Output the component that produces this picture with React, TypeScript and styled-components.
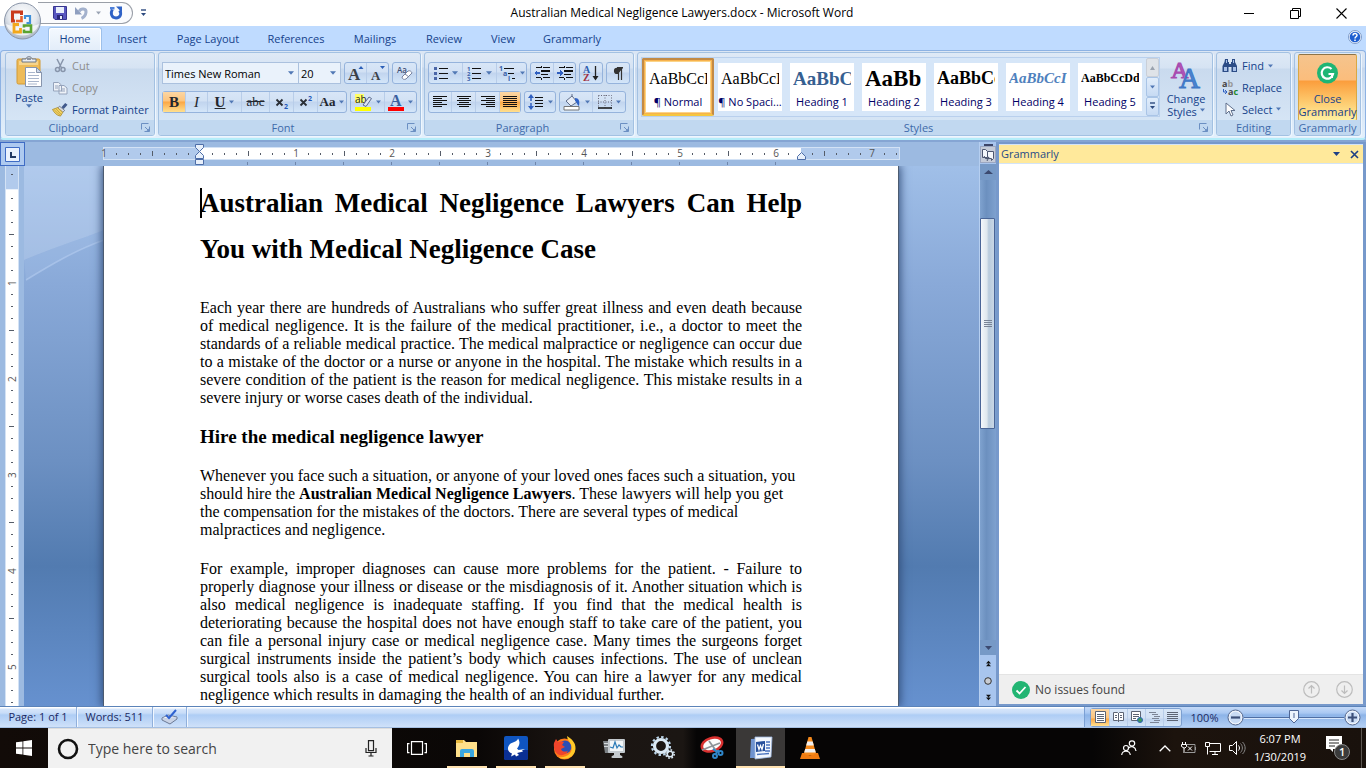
import React from 'react';
import styled, { createGlobalStyle, css } from 'styled-components';

const UI = '"Open Sans", "Noto Sans", sans-serif';
const SERIF = '"Liberation Serif", "Times New Roman", serif';

const Global = createGlobalStyle`
  *, *::before, *::after { box-sizing: border-box; }
  body { margin: 0; font-family: ${UI}; font-size: 11px; color: #15428b; overflow: hidden; }
  button, input, select { font: inherit; color: inherit; }
  button { background: none; border: 0; padding: 0; margin: 0; cursor: default; }
  h1, h2, p { margin: 0; font-weight: normal; }
  svg { display: block; flex: none; overflow: visible; }
`;

const Window = styled.div`
  display: flex;
  flex-direction: column;
  height: 100vh;
  position: relative;
`;

/* ---------- title bar ---------- */
const TitleBar = styled.header`
  display: flex;
  align-items: center;
  justify-content: space-between;
  height: 26px;
  padding-right: 2px;
  background: #fff;
`;
const OfficeButton = styled.button`
  position: absolute;
  left: 3px;
  top: 2px;
  z-index: 3;
`;
const TitleSide = styled.div<{ $end?: boolean }>`
  display: flex;
  align-items: center;
  flex: 1 0 0;
  justify-content: ${p => (p.$end ? 'flex-end' : 'flex-start')};
`;
const QuickAccess = styled.div`
  display: flex;
  align-items: center;
  gap: 8px;
  width: 95px;
  height: 22px;
  margin-left: 38px;
  padding-left: 15px;
  border: 1px solid #9a9fa8;
  border-left: 0;
  border-radius: 0 11px 11px 0;
  background: #fafbfd;
`;
const QuickMore = styled.button`
  margin-left: 7px;
`;
const WindowTitle = styled.h1`
  font-size: 12px;
  line-height: 26px;
  color: #000;
  white-space: nowrap;
`;
const WindowButton = styled.button`
  display: flex;
  align-items: center;
  justify-content: center;
  width: 46px;
  height: 26px;
`;

/* ---------- tabs ---------- */
const TabRow = styled.nav`
  display: flex;
  align-items: flex-end;
  height: 24px;
  padding-left: 47px;
  background: #bfdbff;
`;
const Tab = styled.button<{ $w: number; $active?: boolean }>`
  width: ${p => p.$w}px;
  height: 23px;
  line-height: 23px;
  ${p => p.$active && css`
    width: ${p.$w - 2}px;
    margin: 0 1px;
    border: 1px solid #9dc0ea;
    border-bottom: 0;
    border-radius: 3px 3px 0 0;
    line-height: 22px;
    background: linear-gradient(#f4f9ff, #e3edf9);
    box-shadow: inset 1px 1px 0 #fff, inset -1px 0 0 #fff;
  `}
`;
const HelpButton = styled.button`
  margin-left: auto;
  margin-right: 4px;
  margin-bottom: 6px;
`;

/* ---------- ribbon ---------- */
const Ribbon = styled.section`
  display: flex;
  gap: 3px;
  height: 90px;
  padding: 1px 4px 2px;
  border: 1px solid #8db2e3;
  border-bottom: 2px solid #b4edf9;
  border-radius: 4px;
  background: linear-gradient(#dbe6f4 0, #d3e1f2 16px, #c8d9ee 17px, #e3f0fc 100%);
`;
const RibbonBack = styled.div`
  background: linear-gradient(#bfdbff 50%, #9ebce4 50%);
`;
const GroupBox = styled.div<{ $w?: number }>`
  display: flex;
  flex-direction: column;
  ${p => (p.$w ? `flex: 0 0 ${p.$w}px;` : 'flex: 1 1 0; min-width: 0;')}
  border: 1px solid #a3c1e2;
  border-radius: 3px;
  box-shadow: 1px 1px 0 #eef6fe;
  background: linear-gradient(#dee9f6 0, #d6e3f3 15px, #c9daee 16px, #d9e8f7 100%);
`;
const GroupBody = styled.div<{ $pad?: string }>`
  display: flex;
  flex: 1;
  min-height: 0;
  padding: ${p => p.$pad ?? '0'};
`;
const GroupLabel = styled.div`
  display: flex;
  align-items: center;
  height: 15px;
  padding: 0 4px 0 0;
  background: #c1d8f0;
  color: #3e6aaa;
  line-height: 15px;
  border-radius: 0 0 2px 2px;
  span { flex: 1; text-align: center; white-space: nowrap; }
`;
const PlainLabel = styled(GroupLabel)`
  padding: 0;
`;
const LargeButton = styled.button<{ $w: number; $hot?: boolean }>`
  display: flex;
  flex-direction: column;
  align-items: center;
  justify-content: flex-start;
  width: ${p => p.$w}px;
  padding-top: 3px;
  line-height: 13px;
  white-space: nowrap;
  span { display: flex; align-items: center; justify-content: center; gap: 3px; }
  svg:first-child { margin-bottom: 3px; }
  ${p => p.$hot && css`
    height: 67px;
    margin: 1px 3px;
    padding-top: 2px;
    border: 1px solid #b7914f;
    border-color: #8e7346 #d9a844 #f3c838;
    border-radius: 2px;
    background: linear-gradient(#f5c48d 0, #fbbd7c 25px, #fb9d3c 26px, #fdc467 44px, #fff0a0 100%);
  `}
`;
const SmallColumn = styled.div`
  display: flex;
  flex-direction: column;
  padding-top: 2px;
`;
const SmallButton = styled.button<{ $off?: boolean }>`
  display: flex;
  align-items: center;
  gap: 4px;
  height: 22px;
  white-space: nowrap;
  color: ${p => (p.$off ? '#8d8d8d' : '#15428b')};
`;
const IconSlot = styled.span`
  display: flex;
  justify-content: center;
  width: 16px;
`;
const Rows = styled.div`
  display: flex;
  flex-direction: column;
  gap: 7px;
  padding: 9px 3px 0;
`;
const Row = styled.div`
  display: flex;
  gap: 3px;
`;
const ButtonSet = styled.div`
  display: flex;
  height: 22px;
  border: 1px solid #95b3dc;
  border-radius: 3px;
  background: linear-gradient(#d8e6f7 0, #d2e1f4 9px, #c1d4ee 10px, #d4e6f9 100%);
`;
const ToolButton = styled.button<{ $w: number; $on?: boolean }>`
  display: flex;
  align-items: center;
  justify-content: center;
  gap: 4px;
  width: ${p => p.$w}px;
  height: 20px;
  & + & { border-left: 1px solid #b8cde9; }
  ${p => p.$on && css`
    background: linear-gradient(#fbd6a4 0, #fdc47c 9px, #fba745 10px, #ffe08f 100%);
  `}
`;
const Combo = styled.label<{ $w: number }>`
  position: relative;
  display: block;
  width: ${p => p.$w}px;
  height: 22px;
  & + & { margin-left: -4px; }
  select {
    appearance: none;
    width: 100%;
    height: 22px;
    padding: 0 2px;
    border: 1px solid #abc1de;
    border-radius: 0;
    background: #eaf2fb;
    color: #000;
    outline: 0;
  }
  svg { position: absolute; right: 5px; top: 9px; pointer-events: none; }
`;

/* styles gallery */
const Gallery = styled.div`
  display: flex;
  flex: 1 1 0;
  min-width: 0;
  height: 60px;
  border: 1px solid #b9d0ed;
  background: #d6e6f8;
`;
const GalleryItems = styled.div`
  display: flex;
  flex: 1 1 0;
  min-width: 0;
  overflow: hidden;
`;
const StyleCard = styled.button<{ $on?: boolean }>`
  display: flex;
  flex: 0 0 72px;
  flex-direction: column;
  align-items: stretch;
  min-width: 0;
  height: 58px;
  padding: 3px 2px;
  border: 2px solid #fff0;
  background: #fff;
  background-clip: content-box;
  color: #000066;
  ${p => p.$on && css`
    border: 2px solid #c28a46;
    border-bottom-color: #f5c63f;
    border-radius: 2px;
    background-clip: padding-box;
    box-shadow: inset 0 0 0 1px #f7b24d, inset 0 0 0 2px #fbd488;
  `}
`;
const Sample = styled.span<{ $size: number; $bold?: boolean; $italic?: boolean; $color?: string }>`
  flex: 0 0 31px;
  margin: 0 3px;
  overflow: hidden;
  font-family: ${SERIF};
  font-size: ${p => p.$size}px;
  font-weight: ${p => (p.$bold ? 700 : 400)};
  font-style: ${p => (p.$italic ? 'italic' : 'normal')};
  color: ${p => p.$color ?? '#000'};
  line-height: 31px;
  text-align: left;
  white-space: nowrap;
`;
const SampleName = styled.span`
  line-height: 16px;
  text-align: center;
  white-space: nowrap;
`;
const GalleryScroll = styled.div`
  display: flex;
  flex-direction: column;
  width: 13px;
`;
const GalleryButton = styled.button<{ $off?: boolean }>`
  display: flex;
  flex: 1;
  align-items: center;
  justify-content: center;
  border: 1px solid ${p => (p.$off ? '#c9cfd8' : '#a9c4e6')};
  border-radius: 2px;
  background: ${p => (p.$off ? '#dfe3e8' : 'linear-gradient(#e1edfb, #c6daf3)')};
`;

/* ---------- workspace ---------- */
const Workspace = styled.main`
  display: flex;
  flex: 1;
  min-height: 0;
  border-top: 2px solid #85a5d3;
  background: #9cbae1;
`;
const Editor = styled.section`
  display: flex;
  flex: 1 1 0;
  flex-direction: column;
  min-width: 0;
`;
const RulerRow = styled.div`
  display: flex;
  height: 24px;
`;
const TabSelector = styled.button`
  display: flex;
  align-items: center;
  justify-content: center;
  width: 25px;
  height: 24px;
  border: 1px solid #3f6cc4;
  background: #aecaf0;
`;
const HRuler = styled.div`
  position: relative;
  display: flex;
  height: 13px;
  margin: 5px 0 0 73px;
  background:
    linear-gradient(#fff, #fff) 102px 1px / 601px 11px no-repeat,
    linear-gradient(#b1caec, #b1caec) 6px 1px / 795px 11px no-repeat,
    linear-gradient(#d3e2f5, #d3e2f5) 5px 0 / 797px 13px no-repeat;
`;
const HCell = styled.span`
  display: flex;
  align-items: center;
  justify-content: center;
  width: 12px;
  height: 13px;
  font-size: 10px;
  line-height: 13px;
  color: #555;
`;
const HTick = styled.i<{ $long?: boolean }>`
  width: 1px;
  height: ${p => (p.$long ? 5 : 2)}px;
  background: #555c68;
`;
const TabStops = styled.i`
  position: absolute;
  left: 149px;
  top: 15px;
  width: 530px;
  height: 3px;
  background: linear-gradient(90deg, #6f86ab 1px, transparent 1px) 0 0 / 48px 3px repeat-x;
`;
const Marker = styled.span<{ $x: number; $y: number }>`
  position: absolute;
  left: ${p => p.$x}px;
  top: ${p => p.$y}px;
`;
const EditorBody = styled.div`
  display: flex;
  flex: 1;
  min-height: 0;
`;
const VRulerColumn = styled.div`
  flex: 0 0 24px;
  padding-left: 5px;
  overflow: hidden;
`;
const VRuler = styled.div`
  display: flex;
  flex-direction: column;
  align-items: center;
  width: 14px;
  height: 100%;
  padding-top: 3px;
  border: solid #d3e2f5;
  border-width: 0 1px;
  background: linear-gradient(#b1caec 23px, #d3e2f5 23px, #fff 24px);
`;
const VCell = styled.span`
  display: flex;
  flex: 0 0 12px;
  align-items: center;
  justify-content: center;
  width: 12px;
  font-size: 10px;
  line-height: 12px;
  color: #555;
  writing-mode: vertical-rl;
  transform: rotate(180deg);
`;
const VTick = styled.i<{ $long?: boolean }>`
  width: ${p => (p.$long ? 5 : 2)}px;
  height: 1px;
  background: #555c68;
`;
const Canvas = styled.div`
  position: relative;
  display: flex;
  flex: 1 1 0;
  min-width: 0;
  padding-left: 79px;
  overflow: hidden;
  background: linear-gradient(#a0bfe8 0, #89a9d8 120px, #6c90c2 295px, #527bb0 400px, #6691cf 100%);
`;
const Swoosh = styled.svg`
  position: absolute;
  left: 0;
  top: 0;
`;
const Page = styled.article`
  position: relative;
  flex: 0 0 796px;
  padding: 14px 96px 0;
  border: solid #4c5b70;
  border-width: 0 1px;
  background: #fff;
  box-shadow: 0 0 9px 1px #2f4a76;
  color: #000;
  font-family: ${SERIF};
  font-size: 16px;
  line-height: 18px;
`;
const Caret = styled.i`
  position: absolute;
  left: 96px;
  top: 22px;
  width: 2px;
  height: 30px;
  background: #000;
`;
const DocTitle = styled.h1`
  font-size: 27px;
  font-weight: 700;
  line-height: 46px;
  text-align: justify;
`;
const DocHeading = styled.h2`
  margin-top: 21px;
  font-size: 19px;
  font-weight: 700;
  line-height: 18px;
`;
const Para = styled.p<{ $justify?: boolean; $gap: number }>`
  margin-top: ${p => p.$gap}px;
  text-align: ${p => (p.$justify ? 'justify' : 'left')};
`;

/* scroll bar */
const ScrollColumn = styled.div`
  display: flex;
  flex: 0 0 17px;
  flex-direction: column;
  background: #a8c5ee;
  border-left: 1px solid #b6cff0;
`;
const Splitter = styled.div`
  width: 9px;
  height: 2px;
  margin: 2px auto 0;
  background: #3c4568;
`;
const ScrollButton = styled.button<{ $h: number; $mt?: number; $dark?: boolean; $boxed?: boolean }>`
  display: flex;
  align-items: center;
  justify-content: center;
  width: 16px;
  height: ${p => p.$h}px;
  margin-top: ${p => p.$mt ?? 0}px;
  ${p => p.$dark && 'background: #7699c6;'}
  ${p => p.$boxed && 'background: #c5cbd8; border: 1px solid #9ba7c2;'}
`;
const Track = styled.div`
  flex: 1;
  padding-top: 38px;
  background: linear-gradient(90deg, #7fa2cf, #6c90bf 40%, #7ea1cf);
`;
const Thumb = styled.div`
  display: flex;
  align-items: center;
  justify-content: center;
  width: 15px;
  height: 211px;
  border: 1px solid #4a6597;
  border-radius: 1px;
  background: linear-gradient(90deg, #f4f7fb, #dfe7ee 45%, #b9cbdd 60%, #c9d7e6);
`;

/* task pane */
const Pane = styled.aside`
  display: flex;
  flex: 0 0 370px;
  flex-direction: column;
  padding: 2px 3px 2px 0;
  border-left: 3px solid #7799cb;
  background: #7799cb;
`;
const PaneHeader = styled.div`
  display: flex;
  align-items: center;
  gap: 9px;
  height: 20px;
  padding: 0 4px 0 2px;
  border: solid #d3e4f8;
  border-width: 1px 0 1px;
  background: #ffe99b;
  h2 { flex: 1; font-size: 11px; line-height: 18px; color: #274b86; }
`;
const PaneBody = styled.div`
  flex: 1;
  background: #fff;
`;
const PaneFooter = styled.div`
  display: flex;
  align-items: center;
  height: 30px;
  padding: 0 10px 0 13px;
  border-top: 1px solid #e4e4e4;
  background: #efefef;
  color: #444;
  font-size: 12px;
  span { flex: 1; margin-left: 5px; }
  button { margin-left: 16px; }
`;

/* ---------- status bar ---------- */
const StatusBar = styled.footer`
  display: flex;
  height: 22px;
  border-top: 1px solid #5b83b9;
  border-bottom: 1px solid #a5bfe2;
  background: linear-gradient(#fff 0, #fff 1px, #d5e5fa 2px, #c9ddf8 6px, #aecdf5 8px, #cfe1f9 100%);
  color: #1b2a63;
`;
const StatusItem = styled.button<{ $w: number }>`
  display: flex;
  align-items: center;
  justify-content: center;
  width: ${p => p.$w}px;
  padding-bottom: 1px;
  border-right: 1px solid #90b0dc;
  box-shadow: 1px 0 0 #f1f7ff;
`;
const StatusFill = styled.div`
  flex: 1;
`;
const StatusRight = styled.div`
  display: flex;
  align-items: center;
  flex: 0 0 282px;
  padding-left: 5px;
  border-left: 1px solid #7ba0d4;
  background: linear-gradient(#c5daf8 0, #a9c8f2 6px, #8db4e8 8px, #b3cff4 100%);
`;
const ViewSet = styled(ButtonSet)`
  height: 19px;
  border-color: #7c9fd0;
  button { width: 18px; height: 17px; border: 0; }
`;
const ZoomLabel = styled.label`
  width: 45px;
  text-align: center;
`;
const ZoomSlider = styled.div`
  position: relative;
  display: flex;
  align-items: center;
  flex: 1;
  height: 20px;
  input {
    appearance: none;
    width: 100%;
    height: 1px;
    margin: 0;
    background: #4e6ea3;
    box-shadow: 0 1px 0 #d7e6fb;
  }
  input::-webkit-slider-thumb { appearance: none; width: 10px; height: 14px; }
  svg { position: absolute; left: 45px; top: 3px; pointer-events: none; }
`;

/* ---------- taskbar ---------- */
const Taskbar = styled.nav`
  display: flex;
  height: 40px;
  background: linear-gradient(90deg, #120b08 0, #0a0706 35%, #1b1512 42%, #1b1613 50%, #060505 51%, #060505 80%, #1c130d 86%, #19110c 100%);
  color: #fff;
`;
const TaskButton = styled.button<{ $w: number; $open?: boolean; $active?: boolean }>`
  display: flex;
  align-items: center;
  justify-content: center;
  width: ${p => p.$w}px;
  height: 40px;
  ${p => p.$active && 'background: #3a3837;'}
  ${p => p.$open && css`
    background-image: linear-gradient(#ffe2b0, #ffe2b0);
    background-repeat: no-repeat;
    background-size: ${p.$active ? 49 : 40}px 2px;
    background-position: center bottom;
  `}
`;
const SearchBox = styled.label`
  display: flex;
  align-items: center;
  width: 344px;
  padding: 0 14px 0 9px;
  background: #f1f1f1;
  border-top: 1px solid #ddd;
  input {
    flex: 1;
    min-width: 0;
    padding: 0 0 0 9px;
    border: 0;
    outline: 0;
    background: none;
    color: #333;
    font-size: 14px;
  }
  input::placeholder { color: #444; opacity: 1; }
`;
const Tray = styled.div`
  display: flex;
  margin-left: auto;
`;
const Clock = styled.time`
  width: 70px;
  padding-top: 2px;
  font-size: 11px;
  line-height: 18px;
  text-align: center;
  white-space: nowrap;
`;
const ShowDesktop = styled.button`
  width: 5px;
  border-left: 1px solid #5b5550;
`;

/* ---------- icons ---------- */
const Down = ({ c = '#5178b5', w = 6 }: { c?: string; w?: number }) => (
  <svg width={w} height="4" viewBox="0 0 7 4"><path d="M0 0h7L3.5 4z" fill={c} /></svg>
);
const Up = ({ c = '#5178b5', w = 7 }: { c?: string; w?: number }) => (
  <svg width={w} height="4" viewBox="0 0 7 4" preserveAspectRatio="none"><path d="M0 4h7L3.5 0z" fill={c} /></svg>
);
const Launcher = () => (
  <svg width="9" height="9" viewBox="0 0 9 9" fill="none" stroke="#6b8fc2">
    <path d="M.5 6.500V.5h7M4 4l3 3M8.500 3.500v5h-5" /><path d="M5 8.500h3.500V5z" fill="#6b8fc2" stroke="none" />
  </svg>
);
const OfficeLogo = () => (
  <svg width="39" height="39" viewBox="0 0 39 39">
    <defs>
      <radialGradient id="orb" cx="50%" cy="35%" r="65%">
        <stop offset="0" stopColor="#fff" /><stop offset=".6" stopColor="#e4e8ee" /><stop offset="1" stopColor="#a9b4c4" />
      </radialGradient>
    </defs>
    <circle cx="19.500" cy="19" r="18" fill="url(#orb)" stroke="#8a95a8" />
    <path d="M3 22a17 15 0 0 0 33 0 40 40 0 0 1-33 0z" fill="#fff" opacity=".7" />
    <g fill="none" strokeWidth="3">
      <path d="M12 19H9.500V10H18.500v3" stroke="#c93a1c" />
      <path d="M18.500 14v5H13" stroke="#e8642c" strokeWidth="2.600" />
      <path d="M22 17v-3h5v7h-3.500" stroke="#3f8fd8" strokeWidth="2.200" />
      <path d="M16 22.500h-5V30h6.500v-4" stroke="#f3a81c" strokeWidth="2.800" />
      <path d="M21 25.500v-2h7V30h-7v-2.500" stroke="#5aa431" strokeWidth="2.600" />
    </g>
  </svg>
);
const SaveIcon = () => (
  <svg width="14" height="14" viewBox="0 0 14 14">
    <path d="M.5.5h13v13H2L.5 12z" fill="#5856c0" stroke="#37358f" />
    <path d="M3 1h8v6H3z" fill="#e8eefb" /><path d="M4 9h6v4H4z" fill="#2a2878" /><path d="M7 10h2v3H7z" fill="#e8eefb" />
  </svg>
);
const UndoIcon = () => (
  <svg width="13" height="14" viewBox="0 0 13 14">
    <path d="M0 1v7.500h7z" fill="#8f9fc0" /><path d="M4 5.500c2-4 7.500-3 7 .8-.4 3-2 5-4.500 6" fill="none" stroke="#a3b1cd" strokeWidth="3" />
  </svg>
);
const RedoIcon = () => (
  <svg width="14" height="14" viewBox="0 0 14 14">
    <path d="M3.500 3.500C1 7 2.500 12 7 12s6-4.500 3.500-7.500" fill="none" stroke="#2f62c6" strokeWidth="2.800" />
    <path d="M7 .5h6v6z" fill="#2f62c6" /><path d="M1 1h4.500v2.500H1z" fill="#4e80da" />
  </svg>
);
const MoreIcon = () => (
  <svg width="7" height="8" viewBox="0 0 7 8"><path d="M1 1h5" stroke="#2d4a7f" strokeWidth="1.400" /><path d="M1 4h5L3.500 7z" fill="#2d4a7f" /></svg>
);
const HelpIcon = () => (
  <svg width="14" height="14" viewBox="0 0 14 14">
    <circle cx="7" cy="7" r="6.500" fill="#f4f8ff" stroke="#7f9cc8" /><circle cx="7" cy="7" r="5.300" fill="#1f5fd0" />
    <path d="M5 5.500C5 3 9 3 9 5.300 9 6.800 7 6.800 7 8.500M7 9.500v1.500" fill="none" stroke="#fff" strokeWidth="1.500" />
  </svg>
);
const PasteIcon = () => (
  <svg width="27" height="32" viewBox="0 0 27 32">
    <rect x="1" y="3" width="23" height="25" rx="1.500" fill="#eebb58" stroke="#d29a35" />
    <path d="M3 5h19v4H3z" fill="#f7d48b" />
    <path d="M6 6V3h4c0-3 6-3 6 0h4v3z" fill="#e9edf3" stroke="#6d7685" /><path d="M11 3h4" stroke="#6d7685" strokeWidth="1.500" />
    <path d="M9.500 11.500h11l5 5v14h-16z" fill="#fff" stroke="#8795ad" /><path d="M20.500 11.500v5h5z" fill="#cdd8ea" stroke="#8795ad" />
    <path d="M12 16.500h7M12 19.500h11M12 22.500h11M12 25.500h11M12 28h9" stroke="#a9b6cc" />
  </svg>
);
const CutIcon = () => (
  <svg width="11" height="14" viewBox="0 0 11 14" fill="none" stroke="#8895ab" strokeWidth="1.500">
    <path d="M2 0l4.500 9M8.500 0L4 9" /><circle cx="2.500" cy="10.500" r="2" /><circle cx="8" cy="10.500" r="2" />
  </svg>
);
const CopyIcon = () => (
  <svg width="15" height="14" viewBox="0 0 15 14" fill="#eef2f8" stroke="#95a3bb">
    <path d="M.5 1.500h5l3 2.500v6h-8zM6 4.500h5l3 2.500v6H6z" /><path d="M2 5h3M2 7h3M8 8h4M8 10h4" />
  </svg>
);
const BrushIcon = () => (
  <svg width="16" height="15" viewBox="0 0 17 15">
    <path d="M10 5l4-4.500 2.500 2L12.500 7z" fill="#41598c" /><path d="M8 4l5.500 4.500-2 2L6 6z" fill="#d9dde6" stroke="#5d6471" strokeWidth=".8" />
    <path d="M6 5.500l5.500 5L9 14.500C5 14 2.500 11 .5 7.500z" fill="#f0d264" stroke="#a88522" strokeWidth=".8" /><path d="M2.500 8L9 14M4.500 7l5.500 6" stroke="#b8912b" strokeWidth=".7" />
  </svg>
);
const T = styled.text`font-family: ${SERIF};`;
const GrowIcon = ({ small }: { small?: boolean }) => (
  <svg width="16" height="17" viewBox="0 0 16 17">
    <T x={small ? 1 : 0} y="15" fontSize={small ? 13 : 17} fontWeight="700" fill="#3b4148">A</T>
    <path d={small ? 'M10 1h5l-2.500 3z' : 'M10.500 4h5L13 1z'} fill="#2b5fb8" />
  </svg>
);
const ClearIcon = () => (
  <svg width="18" height="17" viewBox="0 0 18 17">
    <text x="1" y="8" fontSize="8" fontWeight="600" fill="#3d4f74">Aa</text>
    <path d="M6 12l6-6c2-1 4 1 4 2l-6 6c-2 1-4 0-4-2z" fill="#fff" stroke="#7782a0" /><path d="M9 9l4 3" stroke="#7782a0" />
  </svg>
);
const Glyph = styled.span<{ $size?: number; $variant?: 'bold' | 'italic' | 'under' | 'strike' }>`
  font-family: ${SERIF};
  font-size: ${p => p.$size ?? 15}px;
  line-height: 18px;
  font-weight: ${p => (p.$variant === 'italic' || p.$variant === 'strike' ? 400 : 700)};
  color: #23272e;
  font-style: ${p => (p.$variant === 'italic' ? 'italic' : 'normal')};
  text-decoration: ${p => (p.$variant === 'under' ? 'underline' : p.$variant === 'strike' ? 'line-through' : 'none')};
`;
const ScriptIcon = ({ up }: { up?: boolean }) => (
  <svg width="14" height="15" viewBox="0 0 14 15">
    <path d="M1.500 4.500l6 6M7.500 4.500l-6 6" stroke="#2a2e35" strokeWidth="1.800" />
    <text x="9" y={up ? 6 : 14} fontSize="7" fontWeight="700" fill="#2457b8">2</text>
  </svg>
);
const HighlightIcon = () => (
  <svg width="17" height="17" viewBox="0 0 17 17">
    <path d="M0 0h9v9H0z" fill="#ff6" /><text x="0" y="9" fontSize="10" fill="#222">ab</text>
    <path d="M8 11l6-8 2.500 1.500-5.500 8z" fill="#dfe6f2" stroke="#5b6c90" /><path d="M0 13h16v4H0z" fill="#ff0" />
  </svg>
);
const FontColorIcon = () => (
  <svg width="16" height="17" viewBox="0 0 16 17">
    <T x="2" y="12" fontSize="16" fontWeight="700" fill="#3a5f9e">A</T><path d="M0 13h16v4H0z" fill="#f00" />
  </svg>
);
const BulletsIcon = () => (
  <svg width="14" height="14" viewBox="0 0 14 14" shapeRendering="crispEdges">
    <path d="M0 1h3v3H0zM0 6h3v3H0zM0 11h3v3H0z" fill="#4a66a8" /><path d="M5 2h9v1H5zM5 7h9v1H5zM5 12h9v1H5z" fill="#111" />
  </svg>
);
const NumberIcon = () => (
  <svg width="15" height="15" viewBox="0 0 15 15">
    <g fontSize="6" fontWeight="700" fill="#3a5fa8"><text x="0" y="5">1</text><text x="0" y="10">2</text><text x="0" y="15">3</text></g>
    <path d="M5 2.500h9M5 7.500h9M5 12.500h9" stroke="#111" />
  </svg>
);
const MultiIcon = () => (
  <svg width="17" height="16" viewBox="0 0 17 16">
    <g fontSize="7" fontWeight="700" fill="#3a5fa8"><text x="0" y="6">1</text><text x="4" y="11">a</text><text x="9" y="16">i</text></g>
    <path d="M5 3.500h10M9 8.500h6M13 13.500h3" stroke="#111" />
  </svg>
);
const IndentIcon = ({ right }: { right?: boolean }) => (
  <svg width="16" height="14" viewBox="0 0 16 14" shapeRendering="crispEdges">
    <path d="M2 1h5v1H2zM9 1h7v1H9zM7 4h9v2H7zM7 8h7v1H7zM2 11h5v1H2zM9 11h7v1H9zM7 0h1v2H7zM7 12h1v2H7z" fill="#111" />
    <path d={right ? 'M6 7L3 4v2H0v2h3v2z' : 'M0 7l3-3v2h3v2H3v2z'} fill="#2f5fc0" />
  </svg>
);
const SortIcon = () => (
  <svg width="16" height="17" viewBox="0 0 16 17">
    <T x="0" y="8" fontSize="10" fontWeight="700" fill="#2f5fb0">A</T><T x="0" y="16" fontSize="10" fontWeight="700" fill="#a03040">Z</T>
    <path d="M12.500 1v13" stroke="#222" strokeWidth="1.300" /><path d="M9.500 11h6l-3 4.500z" fill="#222" />
  </svg>
);
const PilcrowIcon = () => (
  <svg width="12" height="13" viewBox="0 0 12 13"><path d="M11 .8H5a3 3 0 0 0 0 6.200h1z" fill="#333" /><path d="M6.500 0v13M9.500 0v13M5 .6h6" stroke="#333" strokeWidth="1.200" /></svg>
);
const AlignIcon = ({ widths, side }: { widths: number[]; side: 'l' | 'c' | 'r' }) => (
  <svg width="14" height="12" viewBox="0 0 14 12" shapeRendering="crispEdges">
    {[0, 1, 2, 3, 4, 5].map(i => {
      const w = widths[i % 2];
      const x = side === 'l' ? 0 : side === 'r' ? 14 - w : (14 - w) / 2;
      return <rect key={i} x={x} y={i * 2} width={w} height="1" fill="#111" />;
    })}
  </svg>
);
const SpacingIcon = () => (
  <svg width="16" height="16" viewBox="0 0 16 16">
    <path d="M3 0l3 4H0zM3 16l3-4H0z" fill="#2f5fc0" /><path d="M3 3v10" stroke="#2f5fc0" strokeWidth="1.500" strokeDasharray="4 2" />
    <path d="M7 3.500h8M7 6.500h8M7 9.500h8M7 12.500h8" stroke="#111" />
  </svg>
);
const BucketIcon = () => (
  <svg width="18" height="17" viewBox="0 0 18 17">
    <path d="M3 7l6-5 5 6-6 4z" fill="#e8edf6" stroke="#5d6b88" /><path d="M9 2V0" stroke="#5d6b88" /><path d="M12 4c4 0 5 3 4 8-2-1-2-4-4-5z" fill="#2f62c6" />
    <path d="M1 12.500h15v3.500H1z" fill="#fff" stroke="#777" />
  </svg>
);
const BorderIcon = () => (
  <svg width="14" height="14" viewBox="0 0 14 14"><path d="M.5.5h13v13M.5.5v13M7 0v13M0 7h13" fill="none" stroke="#667" strokeDasharray="1 1.500" /><path d="M0 13h14" stroke="#111" strokeWidth="1.500" /></svg>
);
const ChangeStylesIcon = () => (
  <svg width="30" height="29" viewBox="0 0 30 29">
    <T x="0" y="18" fontSize="24" fill="#b457b8" stroke="#a84cb0" strokeWidth="1.200">A</T>
    <T x="8" y="28" fontSize="29" fill="#4c84cf" stroke="#3f78c6" strokeWidth="1">A</T>
  </svg>
);
const FindIcon = () => (
  <svg width="16" height="14" viewBox="0 0 16 14" fill="#2c4c86">
    <path d="M3 0h3v3h1v2h2V3h1V0h3v3l2 4v6H9.500V8h-3v5H.500V7l2-4z" /><path d="M2 8h3v4H2zM11 8h3v4h-3z" fill="#a9c1e8" /><path d="M4 1h1v3H4zM11 1h1v3h-1z" fill="#a9c1e8" />
  </svg>
);
const ReplaceIcon = () => (
  <svg width="16" height="16" viewBox="0 0 16 16">
    <text x="0" y="7" fontSize="9" fontWeight="700" fill="#444">a<tspan fill="#999">b</tspan></text>
    <text x="6" y="15" fontSize="9" fontWeight="700" fill="#444">a<tspan fill="#1f8a2d">c</tspan></text>
    <path d="M1.500 9v3h3M3 10l2 2-2 2" fill="none" stroke="#2f5fc0" />
  </svg>
);
const CursorIcon = () => (
  <svg width="16" height="15" viewBox="0 0 16 15"><path d="M4 1v11l3-3 2 5 2-1-2-4.500h4z" fill="#fff" stroke="#5f6f8c" /></svg>
);
const GrammarlyIcon = () => (
  <svg width="23" height="32" viewBox="0 0 23 32">
    <circle cx="11.500" cy="16" r="10.500" fill="#1fb574" />
    <path d="M15.500 12A5.700 5.700 0 1 0 17 17h-4.500" fill="none" stroke="#fff" strokeWidth="2.200" /><path d="M16 21v-4" stroke="#fff" strokeWidth="2" />
  </svg>
);
const PageToggle = () => (
  <svg width="14" height="14" viewBox="0 0 14 14" fill="#f5f7fb" stroke="#4e5770">
    <path d="M1.500 1.500h3l2 2v6h-5zM6.500 3.500h6v7l-2 2v-2h-5v-1" /><path d="M3 8l2 3 3-2-2 4" fill="none" />
  </svg>
);
const CheckCircle = () => (
  <svg width="18" height="18" viewBox="0 0 18 18"><circle cx="9" cy="9" r="9" fill="#22b573" /><path d="M4.500 9.500l3 3 6-6.500" fill="none" stroke="#fff" strokeWidth="1.800" /></svg>
);
const ArrowCircle = ({ down }: { down?: boolean }) => (
  <svg width="17" height="17" viewBox="0 0 17 17" fill="none" stroke="#bdbdbd" strokeWidth="1.200">
    <circle cx="8.500" cy="8.500" r="7.800" /><path d={down ? 'M8.500 4.500v8M5.500 9.500l3 3 3-3' : 'M8.500 12.500v-8M5.500 7.500l3-3 3 3'} />
  </svg>
);
const ProofIcon = () => (
  <svg width="17" height="16" viewBox="0 0 17 16">
    <path d="M1 9l6-3 9 2-7 5z" fill="#fff" stroke="#6c7a95" /><path d="M1 9v2l8 4 7-5V8" fill="#c9d3e6" stroke="#6c7a95" />
    <path d="M5 6l3 3 7-8" fill="none" stroke="#2f62d0" strokeWidth="2" />
  </svg>
);
const ViewIcon = ({ kind }: { kind: number }) => (
  <svg width="13" height="12" viewBox="0 0 13 12" fill="none" stroke="#5c6474">
    {kind === 0 && <><path d="M1.500.5h10v11h-10z" fill="#fff" /><path d="M3 3.500h7M3 5.500h7M3 7.500h7M3 9.500h7" /></>}
    {kind === 1 && <><path d="M1.500 1.500h4l1 1 1-1h4v8h-4l-1 1-1-1h-4z" fill="#fff" /><path d="M6.500 2v9M3 4.500h2M3 6.500h2M8 4.500h2M8 6.500h2" /></>}
    {kind === 2 && <><path d="M1.500.5h9v9h-9z" fill="#fff" /><path d="M3 3.500h6M3 5.500h6M3 7.500h3" /><circle cx="10" cy="9" r="2.500" fill="#3f9a5a" stroke="#2a62b8" /></>}
    {kind === 3 && <path d="M1 1.500h7M4 3.500h6M6 5.500h6M4 7.500h7M6 9.500h6M2 11.500h9" stroke="#7b8496" />}
    {kind === 4 && <path d="M1 1.500h11M1 3.500h11M1 5.500h11M1 7.500h11M1 9.500h11" />}
  </svg>
);
const ZoomButtonIcon = ({ plus }: { plus?: boolean }) => (
  <svg width="17" height="17" viewBox="0 0 17 17">
    <circle cx="8.500" cy="8.500" r="7.500" fill="#eef3fb" stroke="#55688e" /><circle cx="8.500" cy="8.500" r="5.800" fill="#c9dbf4" />
    <path d={plus ? 'M4 8.500h9M8.500 4v9' : 'M4 8.500h9'} stroke="#3c4f78" strokeWidth="2.200" />
  </svg>
);
const WinIcon = ({ kind }: { kind: 'min' | 'max' | 'close' }) => (
  <svg width="11" height="11" viewBox="0 0 11 11" fill="none" stroke="#000">
    {kind === 'min' && <path d="M0 5.500h10" />}
    {kind === 'max' && <path d="M.5 2.500h8v8h-8zM2.500 2.500v-2h8v8h-2" />}
    {kind === 'close' && <path d="M.5.5l10 10M10.500.5l-10 10" strokeWidth="1.100" />}
  </svg>
);

/* ---------- data ---------- */
const tabs: [string, number][] = [['Home', 56], ['Insert', 58], ['Page Layout', 94], ['References', 82], ['Mailings', 76], ['Review', 62], ['View', 56], ['Grammarly', 82]];
const styleCards = [
  { name: '¶ Normal', text: 'AaBbCcI', size: 16, on: true },
  { name: '¶ No Spaci...', text: 'AaBbCcI', size: 16 },
  { name: 'Heading 1', text: 'AaBbCc', size: 19, bold: true, color: '#365f91' },
  { name: 'Heading 2', text: 'AaBb', size: 23, bold: true },
  { name: 'Heading 3', text: 'AaBbCc', size: 18, bold: true },
  { name: 'Heading 4', text: 'AaBbCcI', size: 15, bold: true, italic: true, color: '#4f81bd' },
  { name: 'Heading 5', text: 'AaBbCcDd', size: 12, bold: true },
];
const hTicks = Array.from({ length: 67 }, (_, i) => i - 8);
const vTicks = Array.from({ length: 46 }, (_, i) => i - 1);

const Group = ({ label, w, plain, pad, children }: { label: string; w?: number; plain?: boolean; pad?: string; children: React.ReactNode }) => {
  const Label = plain ? PlainLabel : GroupLabel;
  return (
    <GroupBox $w={w}>
      <GroupBody $pad={pad}>{children}</GroupBody>
      <Label><span>{label}</span>{!plain && <button aria-label={`${label} options`}><Launcher /></button>}</Label>
    </GroupBox>
  );
};

export default function App() {
  return (
    <Window>
      <Global />
      <OfficeButton aria-label="Office Button"><OfficeLogo /></OfficeButton>
      <TitleBar>
        <TitleSide>
          <QuickAccess>
            <button aria-label="Save"><SaveIcon /></button>
            <button aria-label="Undo"><UndoIcon /></button>
            <button aria-label="Undo list"><Down c="#9aa3b3" w={5} /></button>
            <button aria-label="Repeat"><RedoIcon /></button>
          </QuickAccess>
          <QuickMore aria-label="Customize Quick Access Toolbar"><MoreIcon /></QuickMore>
        </TitleSide>
        <WindowTitle>Australian Medical Negligence Lawyers.docx - Microsoft Word</WindowTitle>
        <TitleSide $end>
          <WindowButton aria-label="Minimize"><WinIcon kind="min" /></WindowButton>
          <WindowButton aria-label="Restore"><WinIcon kind="max" /></WindowButton>
          <WindowButton aria-label="Close"><WinIcon kind="close" /></WindowButton>
        </TitleSide>
      </TitleBar>

      <TabRow>
        {tabs.map(([t, w], i) => <Tab key={t} $w={w} $active={i === 0}>{t}</Tab>)}
        <HelpButton aria-label="Help"><HelpIcon /></HelpButton>
      </TabRow>

      <RibbonBack>
        <Ribbon>
          <Group label="Clipboard" w={150}>
            <LargeButton $w={46}><PasteIcon /><span>Paste</span><span><Down /></span></LargeButton>
            <SmallColumn>
              <SmallButton $off><IconSlot><CutIcon /></IconSlot>Cut</SmallButton>
              <SmallButton $off><IconSlot><CopyIcon /></IconSlot>Copy</SmallButton>
              <SmallButton><IconSlot><BrushIcon /></IconSlot>Format Painter</SmallButton>
            </SmallColumn>
          </Group>
          <Group label="Font" w={262}>
            <Rows>
              <Row>
                <Combo $w={137}><select aria-label="Font"><option>Times New Roman</option></select><Down /></Combo>
                <Combo $w={43}><select aria-label="Font size"><option>20</option></select><Down /></Combo>
                <ButtonSet>
                  <ToolButton $w={21} aria-label="Grow Font"><GrowIcon /></ToolButton>
                  <ToolButton $w={22} aria-label="Shrink Font"><GrowIcon small /></ToolButton>
                </ButtonSet>
                <ButtonSet><ToolButton $w={23} aria-label="Clear Formatting"><ClearIcon /></ToolButton></ButtonSet>
              </Row>
              <Row>
                <ButtonSet>
                  <ToolButton $w={22} $on><Glyph>B</Glyph></ToolButton>
                  <ToolButton $w={22}><Glyph $variant="italic">I</Glyph></ToolButton>
                  <ToolButton $w={34}><Glyph $variant="under">U</Glyph><Down w={5} /></ToolButton>
                  <ToolButton $w={28}><Glyph $size={13} $variant="strike">abc</Glyph></ToolButton>
                  <ToolButton $w={24} aria-label="Subscript"><ScriptIcon /></ToolButton>
                  <ToolButton $w={24} aria-label="Superscript"><ScriptIcon up /></ToolButton>
                  <ToolButton $w={29}><Glyph $size={13}>Aa</Glyph><Down w={5} /></ToolButton>
                </ButtonSet>
                <ButtonSet>
                  <ToolButton $w={33} aria-label="Highlight"><HighlightIcon /><Down w={5} /></ToolButton>
                  <ToolButton $w={32} aria-label="Font Color"><FontColorIcon /><Down w={5} /></ToolButton>
                </ButtonSet>
              </Row>
            </Rows>
          </Group>
          <Group label="Paragraph" w={210}>
            <Rows>
              <Row>
                <ButtonSet>
                  <ToolButton $w={33} aria-label="Bullets"><BulletsIcon /><Down /></ToolButton>
                  <ToolButton $w={34} aria-label="Numbering"><NumberIcon /><Down /></ToolButton>
                  <ToolButton $w={30} aria-label="Multilevel List"><MultiIcon /><Down w={5} /></ToolButton>
                </ButtonSet>
                <ButtonSet>
                  <ToolButton $w={22} aria-label="Decrease Indent"><IndentIcon /></ToolButton>
                  <ToolButton $w={22} aria-label="Increase Indent"><IndentIcon right /></ToolButton>
                </ButtonSet>
                <ButtonSet><ToolButton $w={22} aria-label="Sort"><SortIcon /></ToolButton></ButtonSet>
                <ButtonSet><ToolButton $w={22} aria-label="Show marks"><PilcrowIcon /></ToolButton></ButtonSet>
              </Row>
              <Row>
                <ButtonSet>
                  <ToolButton $w={22} aria-label="Align Left"><AlignIcon widths={[14, 9]} side="l" /></ToolButton>
                  <ToolButton $w={24} aria-label="Center"><AlignIcon widths={[14, 10]} side="c" /></ToolButton>
                  <ToolButton $w={24} aria-label="Align Right"><AlignIcon widths={[14, 9]} side="r" /></ToolButton>
                  <ToolButton $w={21} $on aria-label="Justify"><AlignIcon widths={[14, 14]} side="l" /></ToolButton>
                </ButtonSet>
                <ButtonSet><ToolButton $w={30} aria-label="Line spacing"><SpacingIcon /><Down w={5} /></ToolButton></ButtonSet>
                <ButtonSet>
                  <ToolButton $w={32} aria-label="Shading"><BucketIcon /><Down w={5} /></ToolButton>
                  <ToolButton $w={33} aria-label="Borders"><BorderIcon /><Down w={5} /></ToolButton>
                </ButtonSet>
              </Row>
            </Rows>
          </Group>
          <Group label="Styles" pad="4px 0 0 3px">
            <Gallery>
              <GalleryItems>
                {styleCards.map(s => (
                  <StyleCard key={s.name} $on={s.on}>
                    <Sample $size={s.size} $bold={s.bold} $italic={s.italic} $color={s.color}>{s.text}</Sample>
                    <SampleName>{s.name}</SampleName>
                  </StyleCard>
                ))}
              </GalleryItems>
              <GalleryScroll>
                <GalleryButton $off aria-label="Previous row"><Up c="#9aa2ae" w={5} /></GalleryButton>
                <GalleryButton aria-label="Next row"><Down w={5} /></GalleryButton>
                <GalleryButton aria-label="More"><MoreIcon /></GalleryButton>
              </GalleryScroll>
            </Gallery>
            <LargeButton $w={52}><ChangeStylesIcon /><span>Change</span><span>Styles<Down w={5} /></span></LargeButton>
          </Group>
          <Group label="Editing" w={75} plain pad="0 0 0 5px">
            <SmallColumn>
              <SmallButton><FindIcon />Find<Down w={5} /></SmallButton>
              <SmallButton><ReplaceIcon />Replace</SmallButton>
              <SmallButton><CursorIcon />Select<Down w={5} /></SmallButton>
            </SmallColumn>
          </Group>
          <Group label="Grammarly" w={67} plain>
            <LargeButton $w={59} $hot><GrammarlyIcon /><span>Close</span><span>Grammarly</span></LargeButton>
          </Group>
        </Ribbon>
      </RibbonBack>

      <Workspace>
        <Editor>
          <RulerRow>
            <TabSelector aria-label="Tab selector">
              <svg width="15" height="15" viewBox="0 0 15 15"><path d="M.5.5h14v14H.5z" fill="#eaf2fd" stroke="#3f6cc4" /><path d="M6 5v5h5" fill="none" stroke="#223a63" strokeWidth="2" /></svg>
            </TabSelector>
            <HRuler>
              {hTicks.map(k => (
                <HCell key={k}>{k === 0 ? null : k % 8 === 0 ? Math.abs(k / 8) : <HTick $long={k % 4 === 0} />}</HCell>
              ))}
              <TabStops />
              <Marker $x={97} $y={-3}>
                <svg width="9" height="22" viewBox="0 0 9 22" fill="#e8f0fb" stroke="#4e6ea8"><path d="M.5.5h8v3l-4 4-4-4zM.5 14.500v-3l4-4 4 4v3zM.5 15.500h8v5h-8z" /></svg>
              </Marker>
              <Marker $x={699} $y={5}>
                <svg width="9" height="9" viewBox="0 0 9 9" fill="#e8f0fb" stroke="#4e6ea8"><path d="M.5 7.500v-3l4-4 4 4v3z" /></svg>
              </Marker>
            </HRuler>
          </RulerRow>
          <EditorBody>
            <VRulerColumn>
              <VRuler>
                {vTicks.map(k => (
                  <VCell key={k}>{k === 0 ? null : k % 8 === 0 ? k / 8 : <VTick $long={k % 4 === 0} />}</VCell>
                ))}
              </VRuler>
            </VRulerColumn>
            <Canvas>
              <Swoosh width="80" height="130" viewBox="0 0 80 130">
                <path d="M0 0h80v64C55 74 28 82 0 94z" fill="#d6e6fa" opacity=".3" />
                <path d="M2 114C28 98 52 84 80 74V64C55 74 28 82 0 94z" fill="#b5cdf0" opacity=".2" />
                <path d="M2 114C28 98 52 84 80 74" fill="none" stroke="#b5cdf0" opacity=".6" strokeWidth="1.500" />
              </Swoosh>
              <Page>
                <Caret />
                <DocTitle>Australian Medical Negligence Lawyers Can Help You with Medical Negligence Case</DocTitle>
                <Para $gap={27} $justify>
                  Each year there are hundreds of Australians who suffer great illness and even death because of medical negligence. It is the failure of the medical practitioner, i.e., a doctor to meet the standards of a reliable medical practice. The medical malpractice or negligence can occur due to a mistake of the doctor or a nurse or anyone in the hospital. The mistake which results in a severe condition of the patient is the reason for medical negligence. This mistake results in a severe injury or worse cases death of the individual.
                </Para>
                <DocHeading>Hire the medical negligence lawyer</DocHeading>
                <Para $gap={21}>
                  Whenever you face such a situation, or anyone of your loved ones faces such a situation, you should hire the <b>Australian Medical Negligence Lawyers</b>. These lawyers will help you get the compensation for the mistakes of the doctors. There are several types of medical malpractices and negligence.
                </Para>
                <Para $gap={21} $justify>
                  For example, improper diagnoses can cause more problems for the patient. - Failure to properly diagnose your illness or disease or the misdiagnosis of it. Another situation which is also medical negligence is inadequate staffing. If you find that the medical health is deteriorating because the hospital does not have enough staff to take care of the patient, you can file a personal injury case or medical negligence case. Many times the surgeons forget surgical instruments inside the patient’s body which causes infections. The use of unclean surgical tools also is a case of medical negligence. You can hire a lawyer for any medical negligence which results in damaging the health of an individual further.
                </Para>
              </Page>
            </Canvas>
          </EditorBody>
        </Editor>

        <ScrollColumn>
          <Splitter />
          <ScrollButton $h={17} $boxed aria-label="View Ruler"><PageToggle /></ScrollButton>
          <ScrollButton $h={16} $mt={1} $dark aria-label="Scroll up"><Up c="#3c4a70" w={9} /></ScrollButton>
          <Track>
            <Thumb><svg width="8" height="8" viewBox="0 0 8 8"><path d="M0 .5h8M0 2.500h8M0 4.500h8M0 6.500h8" stroke="#7a8496" /></svg></Thumb>
          </Track>
          <ScrollButton $h={15} $dark aria-label="Scroll down"><Down c="#3c4a70" w={9} /></ScrollButton>
          <ScrollButton $h={17} aria-label="Previous Page"><svg width="5" height="7" viewBox="0 0 7 8"><path d="M0 4l3.500-4L7 4zM0 8l3.500-4L7 8z" fill="#111" /></svg></ScrollButton>
          <ScrollButton $h={17} aria-label="Browse Object"><svg width="8" height="8" viewBox="0 0 8 8"><circle cx="4" cy="4" r="3.300" fill="#c9ccd2" stroke="#333" /></svg></ScrollButton>
          <ScrollButton $h={17} aria-label="Next Page"><svg width="5" height="7" viewBox="0 0 7 8"><path d="M0 0h7L3.500 4zM0 4h7L3.500 8z" fill="#111" /></svg></ScrollButton>
        </ScrollColumn>

        <Pane>
          <PaneHeader>
            <h2>Grammarly</h2>
            <button aria-label="Pane options"><Down c="#1d3f85" w={9} /></button>
            <button aria-label="Close pane"><svg width="9" height="9" viewBox="0 0 9 9"><path d="M1 1l7 7M8 1L1 8" stroke="#1d3f85" strokeWidth="1.600" /></svg></button>
          </PaneHeader>
          <PaneBody />
          <PaneFooter>
            <CheckCircle /><span>No issues found</span>
            <button aria-label="Previous issue"><ArrowCircle /></button>
            <button aria-label="Next issue"><ArrowCircle down /></button>
          </PaneFooter>
        </Pane>
      </Workspace>

      <StatusBar>
        <StatusItem $w={77}>Page: 1 of 1</StatusItem>
        <StatusItem $w={76}>Words: 511</StatusItem>
        <StatusItem $w={34} aria-label="Proofing"><ProofIcon /></StatusItem>
        <StatusFill />
        <StatusRight>
          <ViewSet>
            {[0, 1, 2, 3, 4].map(k => <ToolButton key={k} $w={18} $on={k === 0} aria-label={`View ${k + 1}`}><ViewIcon kind={k} /></ToolButton>)}
          </ViewSet>
          <ZoomLabel htmlFor="zoom">100%</ZoomLabel>
          <button aria-label="Zoom out"><ZoomButtonIcon /></button>
          <ZoomSlider>
            <input id="zoom" type="range" min={0} max={200} defaultValue={100} />
            <svg width="10" height="14" viewBox="0 0 10 14"><path d="M.5.5h9v8L5 13 .5 8.500z" fill="#eef4fc" stroke="#4e6594" /><path d="M5 3v5" stroke="#4e6594" /></svg>
          </ZoomSlider>
          <button aria-label="Zoom in"><ZoomButtonIcon plus /></button>
          <svg width="5" height="1" />
        </StatusRight>
      </StatusBar>

      <Taskbar>
        <TaskButton $w={48} aria-label="Start">
          <svg width="16" height="16" viewBox="0 0 16 16" fill="#fff"><path d="M0 2.300L6.500 1.400v6.200H0zM7.300 1.300L16 0v7.600H7.300zM0 8.400h6.500v6.200L0 13.700zM7.300 8.400H16V16l-8.700-1.300z" /></svg>
        </TaskButton>
        <SearchBox>
          <svg width="22" height="22" viewBox="0 0 22 22"><circle cx="11" cy="11" r="9" fill="none" stroke="#111" strokeWidth="2.600" /></svg>
          <input type="text" aria-label="Search" placeholder="Type here to search" />
          <svg width="13" height="17" viewBox="0 0 13 17" fill="none" stroke="#222" strokeWidth="1.200"><path d="M3.500.6h5v10h-5zM1 8v4.500h10V8M6 12.500V16M3.500 16h5" /></svg>
        </SearchBox>
        <TaskButton $w={50} aria-label="Task View">
          <svg width="20" height="14" viewBox="0 0 20 14" fill="none" stroke="#fff" strokeWidth="1.200"><path d="M4.500.6h11v12.800h-11zM2.500 2.600H.6v9h1.900M17.500 2.600h1.900v9h-1.900" /></svg>
        </TaskButton>
        <TaskButton $w={49} $open aria-label="File Explorer">
          <svg width="22" height="19" viewBox="0 0 22 19"><path d="M0 1h8l2 2h11v15H0z" fill="#ffe08a" /><path d="M0 1h7v3H0z" fill="#e8b93f" /><path d="M4 18v-6a2 2 0 0 1 2-2h10a2 2 0 0 1 2 2v6h-4v-4H8v4z" fill="#3aa7e0" /></svg>
        </TaskButton>
        <TaskButton $w={49} $open aria-label="Messenger">
          <svg width="24" height="24" viewBox="0 0 24 24"><rect width="24" height="24" rx="2" fill="#0f55c0" /><path d="M0 14h24v8a2 2 0 0 1-2 2H2a2 2 0 0 1-2-2z" fill="#0a2f94" /><path d="M14 2.500c2.500 3.500 1.500 7.500-1 10l1.500 1.500 6.500-1-3 1.500 1 1-6 1.500 2 2-3 1.500-1-2-4 2 1-3c-5-1.500-5-6.500-2-9.500 3-2 7-2 8-5.500z" fill="#fff" /></svg>
        </TaskButton>
        <TaskButton $w={49} $open aria-label="Firefox">
          <svg width="23" height="24" viewBox="0 0 23 24">
            <circle cx="11.500" cy="13" r="10.500" fill="#ff7a1a" /><circle cx="12" cy="11" r="6.500" fill="#2b4fb5" />
            <path d="M14 0c5 3 9 7 8.500 13-1 9-11 12-17 8 9 1 14-4 13-10-.5-5-4-6-4.500-11z" fill="#ffc928" />
            <path d="M1 7l2-4 2 3c2-1 4-1 6 0L9 9l3 2-4 2c1 3 4 3 7 2-2 5-10 6-13 0C1 12 .5 9 1 7z" fill="#f0452b" />
          </svg>
        </TaskButton>
        <TaskButton $w={49} aria-label="Resource Monitor">
          <svg width="24" height="22" viewBox="0 0 24 22"><path d="M1 4h7v12H3z" fill="#7d8286" /><path d="M2 6h4v1H2zM2 9h4v1H2z" fill="#d5dadd" /><rect x="6" y="2" width="17" height="14" rx="1" fill="#c3c9ce" /><rect x="8" y="4" width="13" height="10" fill="#f2f6f8" /><path d="M8 10l3 1 2-6 2 6 2-3 2 2h2" fill="none" stroke="#2b7bb8" strokeWidth="1.200" /><path d="M12 16h6v2c3 1 4 3 0 3h-6c-4 0-3-2 0-3z" fill="#c5cace" /></svg>
        </TaskButton>
        <TaskButton $w={49} aria-label="Services">
          <svg width="24" height="24" viewBox="0 0 24 24" fill="none"><circle cx="10" cy="10" r="6.500" stroke="#dbe9f4" strokeWidth="3.200" /><circle cx="10" cy="10" r="9" stroke="#bcd6ea" strokeWidth="2.200" strokeDasharray="2.400 2.300" /><circle cx="19" cy="18" r="2.800" stroke="#dbe9f4" strokeWidth="1.600" /><circle cx="19" cy="18" r="4.200" stroke="#dbe9f4" strokeWidth="1.500" strokeDasharray="1.700 1.600" /></svg>
        </TaskButton>
        <TaskButton $w={49} aria-label="Snipping Tool">
          <svg width="24" height="24" viewBox="0 0 24 24"><ellipse cx="12" cy="8.500" rx="10.500" ry="6.500" transform="rotate(-18 12 8.500)" fill="#fbfbfb" stroke="#d8302f" strokeWidth="2.500" /><path d="M2 14l18-7M9 5l8 11" stroke="#8f9499" strokeWidth="1.800" /><g fill="none" stroke="#2f86c9" strokeWidth="2"><path d="M13 13l4 3-2 3M17 15h2" /><circle cx="15" cy="20" r="2" /><circle cx="20.500" cy="17" r="2" /></g></svg>
        </TaskButton>
        <TaskButton $w={49} $open $active aria-label="Word">
          <svg width="24" height="23" viewBox="0 0 24 23"><path d="M2 2l16-1v20H1z" fill="#6f93cf" /><path d="M6 0h17l-1 20-16 2z" fill="#f3f7fd" stroke="#9db6de" strokeWidth=".8" /><path d="M7 5l9-1v10l-9 1z" fill="#27509c" /><path d="M8.500 7.500l1.500 5 1.500-4 1.500 4 1.500-5.500" fill="none" stroke="#fff" strokeWidth="1.300" /><path d="M17 5h4M17 8h4M17 11h4M16 14h5M8 17.500l12-1" stroke="#4a73bd" strokeWidth="1.300" /></svg>
        </TaskButton>
        <TaskButton $w={50} aria-label="VLC">
          <svg width="20" height="22" viewBox="0 0 20 22"><path d="M8.500 0h3l5 18h-13z" fill="#f58a1c" /><path d="M7.300 4.500h5.400l1.100 4H6.200zM5.200 12h9.600l1 3.500H4.200z" fill="#f1f1f1" /><path d="M2 16h2c2 3 10 3 12 0h2l2 6H0z" fill="#f07c12" /></svg>
        </TaskButton>
        <Tray>
          <TaskButton $w={40} aria-label="People">
            <svg width="16" height="16" viewBox="0 0 16 16" fill="none" stroke="#fff" strokeWidth="1.200"><circle cx="11" cy="3.500" r="2.700" /><path d="M7.500 8c3-3 7-1 7.500 3" /><circle cx="5" cy="8" r="2.500" /><path d="M.7 15c.5-5 8-5 8.600 0" /></svg>
          </TaskButton>
          <TaskButton $w={32} aria-label="Show hidden icons"><svg width="12" height="7" viewBox="0 0 12 7"><path d="M.7 6.300L6 1l5.300 5.300" fill="none" stroke="#fff" strokeWidth="1.300" /></svg></TaskButton>
          <TaskButton $w={16} aria-label="Battery">
            <svg width="16" height="12" viewBox="0 0 16 12" fill="none" stroke="#fff"><path d="M1.500 0v2M4.500 0v2M.5 2.500h5v2l-1.500 1.500h-1L.5 4.500zM3 6v5" /><path d="M6 2.500h8v8H4M14.500 5v3" stroke="#999" /><path d="M7 4.500l4 4M11 4.500l-4 4" /></svg>
          </TaskButton>
          <TaskButton $w={32} aria-label="Network">
            <svg width="16" height="13" viewBox="0 0 16 13" fill="none" stroke="#fff"><path d="M5 1.500h10.500v8H4.500M10 9.500v3M7 12.500h6M.5.5h4v4h-4zM2.500 4.500v8" /></svg>
          </TaskButton>
          <TaskButton $w={16} aria-label="Volume">
            <svg width="17" height="14" viewBox="0 0 17 14" fill="none" stroke="#fff"><path d="M.5 4.500h3l4-4v13l-4-4h-3zM9.500 4.500c1.300 1.500 1.300 3.500 0 5" /><path d="M11.500 2.500c2.500 2.500 2.500 6.500 0 9M13.500 1c3.500 3.500 3.500 8.500 0 12" stroke="#888" /></svg>
          </TaskButton>
          <Clock>6:07 PM<br />1/30/2019</Clock>
          <TaskButton $w={46} aria-label="Notifications">
            <svg width="24" height="24" viewBox="0 0 24 24"><path d="M0 0h16v13H7v3l-3-3H0z" fill="#fff" /><path d="M3 4h10M3 7h10M3 10h6" stroke="#222" /><circle cx="16" cy="16" r="7.500" fill="#3b3b3b" stroke="#888" /><text x="13" y="20" fontSize="11" fontWeight="600" fill="#fff">1</text></svg>
          </TaskButton>
          <ShowDesktop aria-label="Show desktop" />
        </Tray>
      </Taskbar>
    </Window>
  );
}
